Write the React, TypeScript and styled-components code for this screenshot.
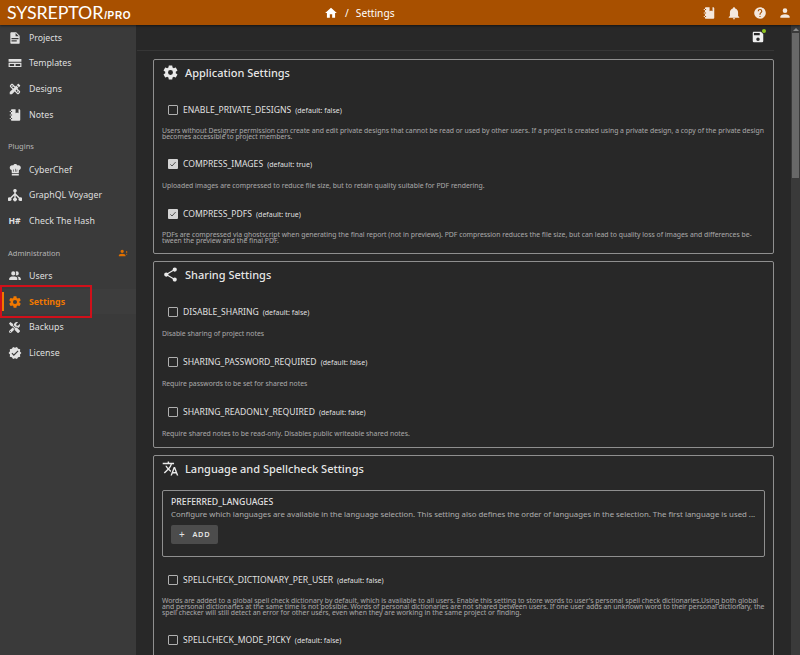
import type { ReactNode } from 'react'
import styled, { createGlobalStyle } from 'styled-components'
import { MdDesignServices } from 'react-icons/md'
import { FaTools } from 'react-icons/fa'

const ICONS = {
  home: 'M10,20V14H14V20H19V12H22L12,3L2,12H5V20H10Z',
  bell: 'M21,19V20H3V19L5,17V11C5,7.9 7.03,5.17 10,4.29C10,4.19 10,4.1 10,4A2,2 0 0,1 12,2A2,2 0 0,1 14,4C14,4.1 14,4.19 14,4.29C16.97,5.17 19,7.9 19,11V17L21,19M14,21A2,2 0 0,1 12,23A2,2 0 0,1 10,21',
  help: 'M15.07,11.25L14.17,12.17C13.45,12.89 13,13.5 13,15H11V14.5C11,13.39 11.45,12.39 12.17,11.67L13.41,10.41C13.78,10.05 14,9.55 14,9C14,7.89 13.1,7 12,7A2,2 0 0,0 10,9H8A4,4 0 0,1 12,5A4,4 0 0,1 16,9C16,9.88 15.64,10.67 15.07,11.25M13,19H11V17H13M12,2A10,10 0 0,0 2,12A10,10 0 0,0 12,22A10,10 0 0,0 22,12C22,6.47 17.5,2 12,2Z',
  account: 'M12,4A4,4 0 0,1 16,8A4,4 0 0,1 12,12A4,4 0 0,1 8,8A4,4 0 0,1 12,4M12,14C16.42,14 20,15.79 20,18V20H4V18C4,15.79 7.58,14 12,14Z',
  cog: 'M12,15.5A3.5,3.5 0 0,1 8.5,12A3.5,3.5 0 0,1 12,8.5A3.5,3.5 0 0,1 15.5,12A3.5,3.5 0 0,1 12,15.5M19.43,12.97C19.47,12.65 19.5,12.33 19.5,12C19.5,11.67 19.47,11.34 19.43,11L21.54,9.37C21.73,9.22 21.78,8.95 21.66,8.73L19.66,5.27C19.54,5.05 19.27,4.96 19.05,5.05L16.56,6.05C16.04,5.66 15.5,5.32 14.87,5.07L14.5,2.42C14.46,2.18 14.25,2 14,2H10C9.75,2 9.54,2.18 9.5,2.42L9.13,5.07C8.5,5.32 7.96,5.66 7.44,6.05L4.95,5.05C4.73,4.96 4.46,5.05 4.34,5.27L2.34,8.73C2.21,8.95 2.27,9.22 2.46,9.37L4.57,11C4.53,11.34 4.5,11.67 4.5,12C4.5,12.33 4.53,12.65 4.57,12.97L2.46,14.63C2.27,14.78 2.21,15.05 2.34,15.27L4.34,18.73C4.46,18.95 4.73,19.03 4.95,18.95L7.44,17.94C7.96,18.34 8.5,18.68 9.13,18.93L9.5,21.58C9.54,21.82 9.75,22 10,22H14C14.25,22 14.46,21.82 14.5,21.58L14.87,18.93C15.5,18.67 16.04,18.34 16.56,17.94L19.05,18.95C19.27,19.03 19.54,18.95 19.66,18.73L21.66,15.27C21.78,15.05 21.73,14.78 21.54,14.63L19.43,12.97Z',
  share: 'M18,16.08C17.24,16.08 16.56,16.38 16.04,16.85L8.91,12.7C8.96,12.47 9,12.24 9,12C9,11.76 8.96,11.53 8.91,11.3L15.96,7.19C16.5,7.69 17.21,8 18,8A3,3 0 0,0 21,5A3,3 0 0,0 18,2A3,3 0 0,0 15,5C15,5.24 15.04,5.47 15.09,5.7L8.04,9.81C7.5,9.31 6.79,9 6,9A3,3 0 0,0 3,12A3,3 0 0,0 6,15C6.79,15 7.5,14.69 8.04,14.19L15.16,18.34C15.11,18.55 15.08,18.77 15.08,19C15.08,20.61 16.39,21.91 18,21.91C19.61,21.91 20.92,20.61 20.92,19A2.92,2.92 0 0,0 18,16.08Z',
  translate: 'M12.87,15.07L10.33,12.56L10.36,12.53C12.1,10.59 13.34,8.36 14.07,6H17V4H10V2H8V4H1V6H12.17C11.5,7.92 10.44,9.75 9,11.35C8.07,10.32 7.3,9.19 6.69,8H4.69C5.42,9.63 6.42,11.17 7.67,12.56L2.58,17.58L4,19L9,14L12.11,17.11L12.87,15.07M18.5,10H16.5L12,22H14L15.12,19H19.87L21,22H23L18.5,10M15.88,17L17.5,12.67L19.12,17H15.88Z',
  save: 'M15,9H5V5H15M12,19A3,3 0 0,1 9,16A3,3 0 0,1 12,13A3,3 0 0,1 15,16A3,3 0 0,1 12,19M17,3H5C3.89,3 3,3.9 3,5V19A2,2 0 0,0 5,21H19A2,2 0 0,0 21,19V7L17,3Z',
  file: 'M13,9H18.5L13,3.5V9M6,2H14L20,8V20A2,2 0 0,1 18,22H6C4.89,22 4,21.1 4,20V4C4,2.89 4.89,2 6,2M15,18V16H6V18H15M18,14V12H6V14H18Z',
  template: 'M1,5H23V19H1V5M1,10V11.5H23V10H1M3,13.5V17H10.5V13.5H3M13,13.5V17H21V13.5H13Z',
  notebook: 'M3,7V5H5V4C5,2.89 5.9,2 7,2H13V9L15.5,7.5L18,9V2H19C20.05,2 21,2.95 21,4V20C21,21.05 20.05,22 19,22H7C5.95,22 5,21.05 5,20V19H3V17H5V13H3V11H5V7H3M7,11H5V13H7V11M7,7V5H5V7H7M7,19V17H5V19H7Z',
  chef: 'M12.5,1.5C10.73,1.5 9.17,2.67 8.66,4.37C8.16,4.13 7.59,4 7,4C4.79,4 3,5.79 3,8C3,9.9 4.34,11.53 6.2,11.92L6.5,17H18.5L18.8,11.92C20.66,11.53 22,9.9 22,8C22,5.79 20.21,4 18,4C17.41,4 16.84,4.13 16.34,4.37C15.83,2.67 14.27,1.5 12.5,1.5M12,10H13V15H12V10M9,11H10L10.4,15H9.4L9,11M15,11H16L15.6,15H14.6L15,11M6.5,18.5H18.5V21.5H6.5V18.5Z',
  graph: 'M12,1.5A3,3 0 0,1 13.2,7.25V9.6L20.2,16.2A3.2,3.2 0 1,1 18.4,17.8L13.2,12.9V16.7A3.2,3.2 0 1,1 10.8,16.7V12.9L5.6,17.8A3.2,3.2 0 1,1 3.8,16.2L10.8,9.6V7.25A3,3 0 0,1 12,1.5Z',
  users: 'M16 17V19H2V17S2 13 9 13 16 15 16 17M12.5 7.5A3.5 3.5 0 1 0 9 11A3.5 3.5 0 0 0 12.5 7.5M15.94 13A5.32 5.32 0 0 1 18 17V19H22V17S22 13.37 15.94 13M15 4A3.39 3.39 0 0 0 13.07 4.59A5 5 0 0 1 13.07 10.41A3.39 3.39 0 0 0 15 11A3.5 3.5 0 0 0 15 4Z',
  license: 'M23,12L20.56,9.22L20.9,5.54L17.29,4.72L15.4,1.54L12,3L8.6,1.54L6.71,4.72L3.1,5.53L3.44,9.21L1,12L3.44,14.78L3.1,18.47L6.71,19.29L8.6,22.47L12,21L15.4,22.46L17.29,19.28L20.9,18.46L20.56,14.78L23,12M10,17L6,13L7.41,11.59L10,14.17L16.59,7.58L18,9L10,17Z',
  accountAlert: 'M10 4A4 4 0 0 0 6 8A4 4 0 0 0 10 12A4 4 0 0 0 14 8A4 4 0 0 0 10 4M10 14C5.58 14 2 15.79 2 18V20H18V18C18 15.79 14.42 14 10 14M20 12V7H22V12H20M20 16V14H22V16H20Z',
}

const GlobalStyle = createGlobalStyle`
  html, body { margin: 0; height: 100%; overflow: hidden; background: #282828; }
  #root { height: 655px; }
  * { box-sizing: border-box; }
`

const Page = styled.div`
  width: 800px;
  height: 655px;
  display: flex;
  flex-direction: column;
  overflow: hidden;
  position: relative;
  opacity: 0.999;
  font-family: 'Noto Sans', sans-serif;
  color: rgba(255, 255, 255, 0.87);
`

const TopBar = styled.header`
  height: 25px;
  flex-shrink: 0;
  background: #a85000;
  display: flex;
  align-items: center;
  box-shadow: 0 1px 2px rgba(0, 0, 0, 0.5);
  z-index: 2;
  padding: 0 8px 0 7px;
`

const Logo = styled.div`
  width: 317px;
  flex-shrink: 0;
  display: flex;
  align-items: baseline;
  color: #fff;
  font-family: 'Lato', sans-serif;
`

const LogoName = styled.span`
  font-size: 17.8px;
  font-weight: 400;
  line-height: 25px;
  letter-spacing: -0.1px;
`

const LogoPro = styled.span`
  font-family: 'Liberation Sans', sans-serif;
  font-size: 10px;
  font-weight: 700;
  letter-spacing: 0.6px;
  margin-left: 1px;
`

const Crumbs = styled.div`
  flex: 1;
  display: flex;
  align-items: center;
  gap: 7px;
  color: #fff;
  font-size: 10.2px;
`

const TopIcons = styled.div`
  display: flex;
  align-items: center;
  gap: 11.5px;
`

const Body = styled.div`
  flex: 1;
  min-height: 0;
  display: flex;
`

const Sidebar = styled.aside`
  width: 136px;
  flex-shrink: 0;
  background: #3a3a3a;
  box-shadow: 1px 0 0 #333;
`

const NavGroup = styled.div`
  margin-bottom: 8.5px;
`

const GroupTitle = styled.div`
  height: 21px;
  padding: 0 8px;
  display: flex;
  align-items: center;
  justify-content: space-between;
  font-size: 7.5px;
  color: rgba(255, 255, 255, 0.62);
`

const NavItem = styled.div<{ $active?: boolean }>`
  height: 25.6px;
  display: flex;
  align-items: center;
  padding-left: 7.5px;
  gap: 7.5px;
  font-size: 8.8px;
  position: relative;
  color: ${p => (p.$active ? '#f07800' : 'rgba(255, 255, 255, 0.85)')};
  font-weight: ${p => (p.$active ? 700 : 400)};
  background: ${p => (p.$active ? 'rgba(255, 255, 255, 0.02)' : 'transparent')};
  &::before {
    content: '';
    display: ${p => (p.$active ? 'block' : 'none')};
    position: absolute;
    left: 2px;
    top: 3px;
    bottom: 3px;
    width: 2px;
    background: #f07800;
  }
`

const NavIcon = styled.span`
  width: 14px;
  height: 14px;
  display: flex;
  align-items: center;
  justify-content: center;
  flex-shrink: 0;
  font-size: 8.6px;
  font-weight: 700;
`

const Highlight = styled.div`
  position: absolute;
  left: 0;
  top: 285px;
  width: 92px;
  height: 33px;
  border: 2px solid #d0101a;
`

const Main = styled.main`
  flex: 1;
  min-width: 0;
  overflow: hidden;
  background: #282828;
`

const Toolbar = styled.div`
  height: 26px;
  margin: 0 17px 0 1px;
  border-bottom: 1px solid #363636;
  display: flex;
  align-items: center;
  justify-content: flex-end;
  padding: 0 9px 2px 0;
`

const SaveWrap = styled.span`
  position: relative;
  display: flex;
`

const SaveDot = styled.span`
  position: absolute;
  right: -1px;
  top: -1px;
  width: 4px;
  height: 4px;
  border-radius: 50%;
  background: #8fc31f;
`

const Content = styled.div`
  padding: 8px 17px 0;
`

const Card = styled.section`
  border: 1px solid #8f8f8f;
  border-radius: 2px;
  padding: 0 8px;
  margin-bottom: 7.5px;
`

const CardTitle = styled.h2`
  margin: 0 0 9px;
  height: 25px;
  display: flex;
  align-items: center;
  gap: 6px;
  font-size: 11px;
  font-weight: 500;
  color: rgba(255, 255, 255, 0.9);
`

const Setting = styled.div`
  margin-bottom: 14px;
  h2 + & { margin-top: 14.5px; }
  &:last-child { margin-bottom: 9px; }
`

const CheckRow = styled.div`
  height: 20px;
  display: flex;
  align-items: center;
  padding-left: 6px;
  gap: 5px;
  font-size: 8.6px;
`

const Box = styled.span<{ $on?: boolean }>`
  width: 10px;
  height: 10px;
  flex-shrink: 0;
  border-radius: 1px;
  display: flex;
  align-items: center;
  justify-content: center;
  border: ${p => (p.$on ? '0' : '1.2px solid #b0b0b0')};
  background: ${p => (p.$on ? '#d4d4d4' : 'transparent')};
`

const Default = styled.span`
  font-size: 7px;
  margin-left: -1px;
  padding-top: 1px;
`

const Hint = styled.div`
  margin-top: 8px;
  min-height: 8px;
  display: flex;
  align-items: center;
  font-size: 6.85px;
  line-height: 6px;
  color: rgba(255, 255, 255, 0.6);
`

const FieldBox = styled.div`
  border: 1px solid #8f8f8f;
  border-radius: 2px;
  height: 66.5px;
  padding: 5px 8px 0;
  margin-bottom: 13px;
  overflow: hidden;
`

const FieldName = styled.div`
  font-size: 8.7px;
  font-weight: 500;
  line-height: 12px;
`

const FieldDesc = styled.div`
  font-size: 7.8px;
  line-height: 13px;
  white-space: nowrap;
  color: rgba(255, 255, 255, 0.62);
`

const AddButton = styled.button`
  display: flex;
  align-items: center;
  gap: 7px;
  margin-top: 4px;
  width: 47px;
  height: 18.5px;
  padding: 0 0 0 8px;
  background: #4c4c4c;
  border: 0;
  border-radius: 2px;
  color: rgba(255, 255, 255, 0.87);
  font-family: inherit;
  font-size: 7.4px;
  font-weight: 600;
  letter-spacing: 0.7px;
`

const AddPlus = styled.span`
  font-size: 10px;
  line-height: 10px;
  font-weight: 400;
`

const ScrollTrack = styled.div`
  width: 9px;
  flex-shrink: 0;
  background: #3a3a3a;
  display: flex;
  flex-direction: column;
  align-items: center;
  padding-top: 3px;
`

const ScrollArrow = styled.span`
  width: 0;
  height: 0;
  border-left: 3px solid transparent;
  border-right: 3px solid transparent;
  border-bottom: 3px solid #8a8a8a;
  margin-bottom: 2px;
`

const ScrollThumb = styled.div`
  width: 7px;
  height: 145px;
  background: #686868;
`

function Icon({ d, size = 14, color = 'currentColor' }: { d: string; size?: number; color?: string }) {
  return (
    <svg width={size} height={size} viewBox="0 0 24 24" fill={color} fillRule="evenodd">
      <path d={d} />
    </svg>
  )
}

function CheckSetting({ name, on, children }: { name: string; on?: boolean; children?: ReactNode }) {
  return (
    <Setting>
      <CheckRow>
        <Box $on={on}>
          {on && (
            <svg width="8" height="8" viewBox="0 0 24 24" fill="none" stroke="#555" strokeWidth="3">
              <path d="M4,13L9,18L20,6" />
            </svg>
          )}
        </Box>
        {name}
        <Default>(default: {on ? 'true' : 'false'})</Default>
      </CheckRow>
      <Hint><span>{children}</span></Hint>
    </Setting>
  )
}

export default function App() {
  return (
    <Page>
      <GlobalStyle />
      <TopBar>
        <Logo>
          <LogoName>SYSREPTOR</LogoName>
          <LogoPro>/PRO</LogoPro>
        </Logo>
        <Crumbs>
          <Icon d={ICONS.home} size={14} />
          <span>/</span>
          <span>Settings</span>
        </Crumbs>
        <TopIcons>
          <Icon d={ICONS.notebook} />
          <Icon d={ICONS.bell} />
          <Icon d={ICONS.help} />
          <Icon d={ICONS.account} />
        </TopIcons>
      </TopBar>
      <Body>
        <Sidebar>
          <NavGroup>
            <NavItem><NavIcon><Icon d={ICONS.file} /></NavIcon>Projects</NavItem>
            <NavItem><NavIcon><Icon d={ICONS.template} /></NavIcon>Templates</NavItem>
            <NavItem><NavIcon><MdDesignServices size={14} /></NavIcon>Designs</NavItem>
            <NavItem><NavIcon><Icon d={ICONS.notebook} /></NavIcon>Notes</NavItem>
          </NavGroup>
          <NavGroup>
            <GroupTitle>Plugins</GroupTitle>
            <NavItem><NavIcon><Icon d={ICONS.chef} /></NavIcon>CyberChef</NavItem>
            <NavItem><NavIcon><Icon d={ICONS.graph} /></NavIcon>GraphQL Voyager</NavItem>
            <NavItem><NavIcon>H#</NavIcon>Check The Hash</NavItem>
          </NavGroup>
          <NavGroup>
            <GroupTitle>
              Administration
              <Icon d={ICONS.accountAlert} size={10} color="#e07000" />
            </GroupTitle>
            <NavItem><NavIcon><Icon d={ICONS.users} /></NavIcon>Users</NavItem>
            <NavItem $active><NavIcon><Icon d={ICONS.cog} /></NavIcon>Settings</NavItem>
            <NavItem><NavIcon><FaTools size={11} /></NavIcon>Backups</NavItem>
            <NavItem><NavIcon><Icon d={ICONS.license} /></NavIcon>License</NavItem>
          </NavGroup>
        </Sidebar>
        <Main>
          <Toolbar>
            <SaveWrap>
              <Icon d={ICONS.save} color="#eee" />
              <SaveDot />
            </SaveWrap>
          </Toolbar>
          <Content>
            <Card>
              <CardTitle><Icon d={ICONS.cog} size={17} />Application Settings</CardTitle>
              <CheckSetting name="ENABLE_PRIVATE_DESIGNS">
                Users without Designer permission can create and edit private designs that cannot be read or used by other users. If a project is created using a private design, a copy of the private design becomes accessible to project members.
              </CheckSetting>
              <CheckSetting name="COMPRESS_IMAGES" on>
                Uploaded images are compressed to reduce file size, but to retain quality suitable for PDF rendering.
              </CheckSetting>
              <CheckSetting name="COMPRESS_PDFS" on>
                PDFs are compressed via ghostscript when generating the final report (not in previews). PDF compression reduces the file size, but can lead to quality loss of images and differences be-<br />tween the preview and the final PDF.
              </CheckSetting>
            </Card>
            <Card>
              <CardTitle><Icon d={ICONS.share} size={17} />Sharing Settings</CardTitle>
              <CheckSetting name="DISABLE_SHARING">Disable sharing of project notes</CheckSetting>
              <CheckSetting name="SHARING_PASSWORD_REQUIRED">Require passwords to be set for shared notes</CheckSetting>
              <CheckSetting name="SHARING_READONLY_REQUIRED">Require shared notes to be read-only. Disables public writeable shared notes.</CheckSetting>
            </Card>
            <Card>
              <CardTitle><Icon d={ICONS.translate} size={17} />Language and Spellcheck Settings</CardTitle>
              <FieldBox>
                <FieldName>PREFERRED_LANGUAGES</FieldName>
                <FieldDesc>Configure which languages are available in the language selection. This setting also defines the order of languages in the selection. The first language is used ...</FieldDesc>
                <AddButton><AddPlus>+</AddPlus>ADD</AddButton>
              </FieldBox>
              <CheckSetting name="SPELLCHECK_DICTIONARY_PER_USER">
                Words are added to a global spell check dictionary by default, which is available to all users. Enable this setting to store words to user's personal spell check dictionaries.Using both global and personal dictionaries at the same time is not possible. Words of personal dictionaries are not shared between users. If one user adds an unknown word to their personal dictionary, the spell checker will still detect an error for other users, even when they are working in the same project or finding.
              </CheckSetting>
              <CheckSetting name="SPELLCHECK_MODE_PICKY" />
            </Card>
          </Content>
        </Main>
        <ScrollTrack>
          <ScrollArrow />
          <ScrollThumb />
        </ScrollTrack>
      </Body>
      <Highlight />
    </Page>
  )
}
